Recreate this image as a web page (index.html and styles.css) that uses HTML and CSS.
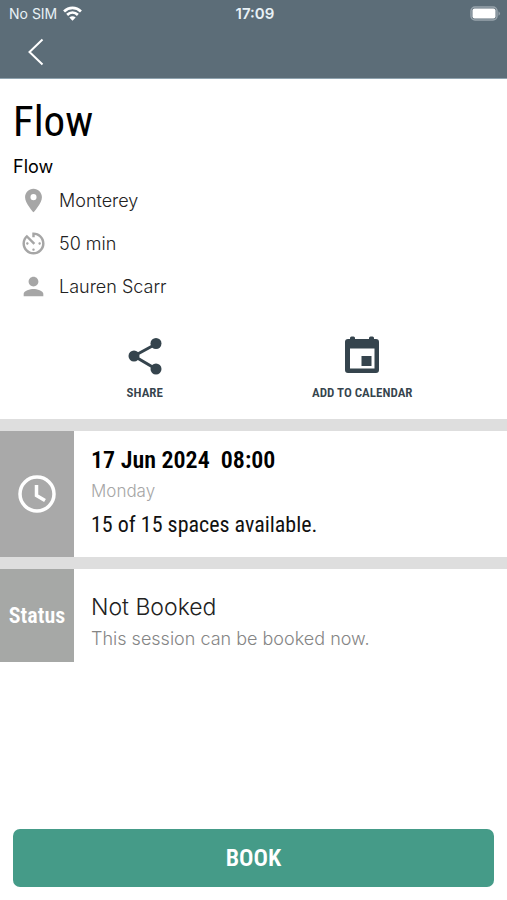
FILE: index.html
```html
<!DOCTYPE html>
<html lang="en">
<head>
<meta charset="utf-8">
<meta name="viewport" content="width=device-width, initial-scale=1">
<title>Flow</title>
<link rel="stylesheet" href="styles.css">
</head>
<body>
<header class="header">
  <div class="statusbar">
    <div class="carrier">
      <span>No SIM</span>
      <svg class="wifi" viewBox="0 0 18 14" aria-hidden="true"><path d="M1 5C5.500.7 12.500.7 17 5"/><path d="M3.900 8.300c3-2.800 7.200-2.800 10.200 0"/><path class="wifi-dot" d="M6 10.800c1.800-1.500 4.200-1.500 6 0L9 13.800z"/></svg>
    </div>
    <time class="clock">17:09</time>
    <svg class="battery" viewBox="0 0 31 15" aria-hidden="true"><rect class="battery-shell" x="1" y="1" width="26" height="13" rx="4"/><rect class="battery-fill" x="2.500" y="2.500" width="23" height="10" rx="2"/><path class="battery-tip" d="M28.500 5.200q3 2.300 0 4.600z"/></svg>
  </div>
  <nav class="nav">
    <button class="back" type="button" aria-label="Back"><svg viewBox="0 0 16 28" aria-hidden="true"><path d="M14.500 1.500 1.500 14l13 12.500"/></svg></button>
  </nav>
</header>
<main class="main">
  <section class="intro">
    <h1 class="title">Flow</h1>
    <p class="kind">Flow</p>
    <ul class="facts">
      <li><svg class="fact-icon" viewBox="0 0 24 24" aria-hidden="true"><path d="M12 1.500C7.800 1.500 4.500 4.800 4.500 9c0 5.400 7.500 13.500 7.500 13.500S19.500 14.400 19.500 9c0-4.200-3.300-7.500-7.500-7.500zm0 10.200a2.700 2.700 0 1 1 0-5.400 2.700 2.700 0 0 1 0 5.400z"/></svg>Monterey</li>
      <li><svg class="fact-icon" viewBox="1 1 22 22" aria-hidden="true"><path d="M11 17c0 .550.450 1 1 1s1-.450 1-1-.450-1-1-1-1 .450-1 1zm0-14v4h2V5.080c3.390.490 6 3.390 6 6.920 0 3.870-3.130 7-7 7s-7-3.130-7-7c0-1.680.590-3.220 1.580-4.420L12 13l1.410-1.410-6.800-6.800v.020C4.420 6.450 3 9.050 3 12c0 4.970 4.020 9 9 9a9 9 0 0 0 0-18h-1zm7 9c0-.550-.450-1-1-1s-1 .450-1 1 .450 1 1 1 1-.450 1-1zM6 12c0 .550.450 1 1 1s1-.450 1-1-.450-1-1-1-1 .450-1 1z"/></svg>50 min</li>
      <li><svg class="fact-icon" viewBox="1 1 22 22" aria-hidden="true"><path d="M12 12c2.210 0 4-1.790 4-4s-1.790-4-4-4-4 1.790-4 4 1.790 4 4 4zm0 2c-2.670 0-8 1.340-8 4v2h16v-2c0-2.660-5.330-4-8-4z"/></svg>Lauren Scarr</li>
    </ul>
  </section>
  <div class="actions">
    <button class="action" type="button">
      <svg viewBox="0 0 44 44" aria-hidden="true"><path class="share-lines" d="M33 10 11 22l22 13"/><circle cx="33" cy="9.500" r="5.500"/><circle cx="11" cy="22" r="5.500"/><circle cx="33" cy="35" r="5.500"/></svg>
      <span>SHARE</span>
    </button>
    <button class="action" type="button">
      <svg viewBox="0 0 44 44" aria-hidden="true"><path fill-rule="evenodd" d="M10 5V4q0-1.500 1.500-1.500h2Q15 2.500 15 4v1h14V4q0-1.500 1.500-1.500h2Q34 2.500 34 4v1h2q3 0 3 3v28q0 3-3 3H8q-3 0-3-3V8q0-3 3-3zM10 14.500v20h24.500v-20zM21.500 22h10v10h-10z"/></svg>
      <span>ADD TO CALENDAR</span>
    </button>
  </div>
  <section class="row">
    <div class="tile"><svg class="tile-clock" viewBox="0 0 40 40" aria-hidden="true"><circle cx="20" cy="20" r="17"/><path d="M19.500 11v10.500l8.500 5"/></svg></div>
    <div class="details">
      <h2 class="date">17 Jun 2024&nbsp; 08:00</h2>
      <p class="weekday">Monday</p>
      <p class="spaces">15 of 15 spaces available.</p>
    </div>
  </section>
  <section class="row">
    <div class="tile tile-status">Status</div>
    <div class="details details-status">
      <h2 class="state">Not Booked</h2>
      <p class="note">This session can be booked now.</p>
    </div>
  </section>
</main>
<footer class="footer"><button class="book" type="button">BOOK</button></footer>
</body>
</html>
```
FILE: styles.css
```css
* { box-sizing: border-box; }

:root {
  --condensed: "Roboto Condensed", "Open Sans Condensed", "Liberation Sans Narrow", "Roboto", sans-serif;
  --sans: "Inter", "Liberation Sans", sans-serif;
}

body {
  margin: 0;
  min-height: 100vh;
  display: flex;
  flex-direction: column;
  background: #fff;
  color: #000;
  font-family: var(--sans);
}

h1, h2, p, ul { margin: 0; padding: 0; }
button { border: 0; padding: 0; background: none; font: inherit; color: inherit; cursor: pointer; }
svg { display: block; }

.header { background: #5c6d78; border-bottom: 1px solid #8fa3af; color: #e8f1f6; }
.statusbar {
  display: grid;
  grid-template-columns: 1fr auto 1fr;
  align-items: center;
  height: 27px;
  padding: 0 6px 0 9px;
  font-size: 14px;
}
.carrier { display: flex; align-items: center; gap: 6px; }
.wifi { width: 19px; height: 15px; fill: none; stroke: #fff; stroke-width: 2.600; }
.wifi-dot { fill: #fff; stroke: none; }
.clock { font-size: 15px; font-weight: 600; }
.battery { width: 31px; height: 15px; justify-self: end; }
.battery-shell { fill: none; stroke: #98a4ac; stroke-width: 1.500; }
.battery-fill { fill: #fff; }
.battery-tip { fill: #98a4ac; }
.nav { display: flex; align-items: center; height: 51px; padding: 0 24px 2px; }
.back { padding: 0 4px; }
.back svg { width: 16px; height: 28px; fill: none; stroke: #fff; stroke-width: 2; }

.main { flex: 1; }
.intro { padding: 16px 13px 0; }
.title { font: 400 43px/52px var(--condensed); }
.kind { margin-top: 8px; font-size: 18px; line-height: 24px; }
.facts { list-style: none; }
.facts li {
  display: flex;
  align-items: center;
  gap: 12px;
  height: 43px;
  padding-left: 7px;
  font-size: 18px;
  font-weight: 300;
  color: #222;
}
.fact-icon { width: 27px; height: 27px; fill: #a6a6a6; }

.actions { display: grid; grid-template-columns: 1fr 1fr; padding: 26px 36px 16px; }
.action {
  display: flex;
  flex-direction: column;
  align-items: center;
  gap: 5px;
  color: #35444d;
  font: 600 13px/20px var(--condensed);
}
.action svg { width: 44px; height: 44px; fill: currentColor; }
.share-lines { fill: none; stroke: currentColor; stroke-width: 3; }

.row { display: flex; border-top: 12px solid #dedede; }
.tile {
  flex: none;
  display: flex;
  align-items: center;
  justify-content: center;
  width: 74px;
  background: #a9a9a9;
  color: #fff;
  font: 600 22px/32px var(--condensed);
}
.tile-status { background: #a6a8a6; }
.tile-clock { width: 40px; height: 40px; fill: none; stroke: #fff; stroke-width: 3.500; }
.details { flex: 1; padding: 12px 17px 12px; }
.date { font: 600 24px/34px var(--condensed); }
.weekday { font-size: 17px; font-weight: 300; line-height: 28px; color: #a6a6a6; }
.spaces { font: 400 22px/40px var(--condensed); color: #111; }
.details-status { padding: 20px 17px 9px; }
.state { font-size: 23px; font-weight: 300; line-height: 36px; color: #222; }
.note { font-size: 18px; font-weight: 300; line-height: 28px; color: #858585; }

.footer { padding: 0 13px 13px; }
.book {
  display: block;
  width: 100%;
  height: 58px;
  border-radius: 7px;
  background: #459b88;
  color: #fff;
  font: 600 24px/32px var(--condensed);
}
```
